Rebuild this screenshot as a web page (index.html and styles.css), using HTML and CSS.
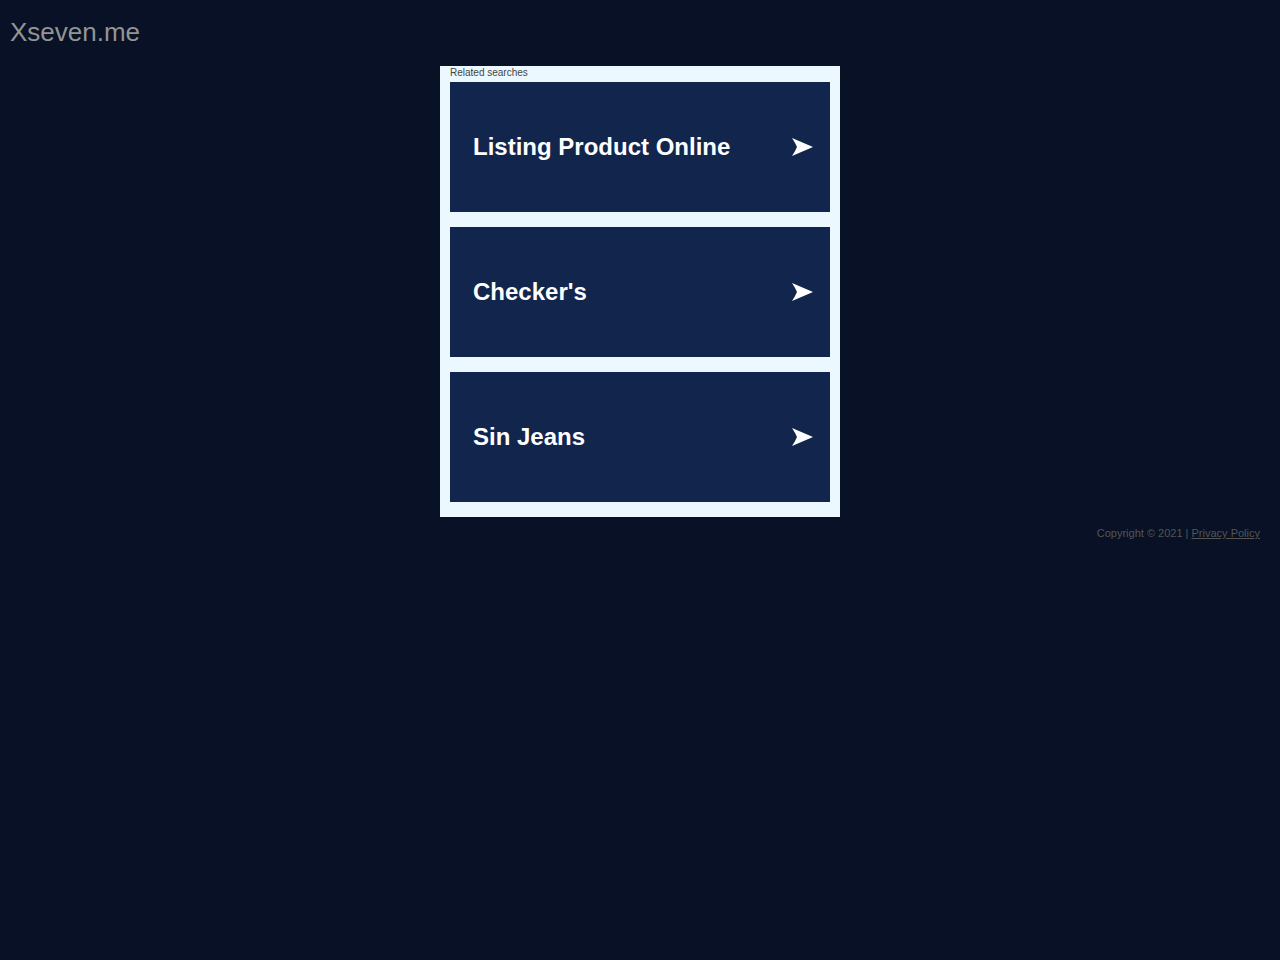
FILE: index.html
```html
<!DOCTYPE html>
<html lang="en">
<head>
<meta charset="utf-8">
<title>Xseven.me</title>
<link rel="stylesheet" href="styles.css">
</head>
<body>
<header class="header"><h1 class="domain">Xseven.me</h1></header>
<main class="panel">
  <h2 class="panel-title">Related searches</h2>
  <ul class="list">
    <li><a class="card" href="#"><span>Listing Product Online</span><svg class="arrow" viewBox="0 0 22 20" aria-hidden="true"><path d="M1 1 22 10 1 19Q4 14.5 6 10 4 5.500 1 1z"/></svg></a></li>
    <li><a class="card" href="#"><span>Checker's</span><svg class="arrow" viewBox="0 0 22 20" aria-hidden="true"><path d="M1 1 22 10 1 19Q4 14.5 6 10 4 5.500 1 1z"/></svg></a></li>
    <li><a class="card" href="#"><span>Sin Jeans</span><svg class="arrow" viewBox="0 0 22 20" aria-hidden="true"><path d="M1 1 22 10 1 19Q4 14.5 6 10 4 5.500 1 1z"/></svg></a></li>
  </ul>
</main>
<footer class="footer">Copyright © 2021 | <a class="policy" href="#">Privacy Policy</a></footer>
</body>
</html>
```

FILE: styles.css
```css
* {
  box-sizing: border-box;
}

body {
  margin: 0;
  background: #081126;
  font-family: "Liberation Sans", Arial, sans-serif;
}

.header {
  padding: 17px 10px 19px;
}

.domain {
  margin: 0;
  color: #949494;
  font-size: 26px;
  font-weight: 400;
  line-height: 30px;
}

.panel {
  max-width: 400px;
  margin: 0 auto;
  padding: 0 10px 15px;
  background: #ecf8ff;
}

.panel-title {
  margin: 0;
  padding-bottom: 3px;
  color: #444;
  font-size: 10px;
  font-weight: 400;
  line-height: 13px;
}

.list {
  display: grid;
  gap: 15px;
  margin: 0;
  padding: 0;
  list-style: none;
}

.card {
  display: flex;
  align-items: center;
  justify-content: space-between;
  min-height: 130px;
  padding: 0 17px 0 23px;
  background: #12264d;
  color: #fff;
  font-size: 24px;
  font-weight: 700;
  line-height: 28px;
  text-decoration: none;
}

.arrow {
  flex: none;
  width: 22px;
  height: 20px;
  fill: currentColor;
}

.footer {
  padding: 10px 20px;
  color: #555;
  font-size: 11px;
  line-height: 13px;
  text-align: right;
}

.policy {
  color: inherit;
}
```
